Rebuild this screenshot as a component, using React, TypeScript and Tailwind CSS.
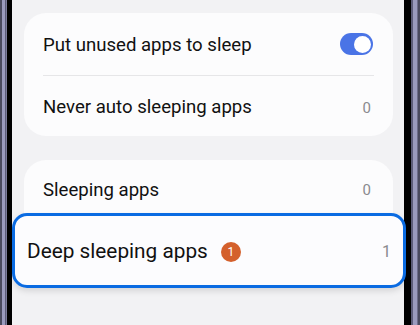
import React from "react";

export default function App() {
  return (
    <div
      className="flex w-[420px] h-[325px] overflow-hidden bg-[#f2f2f4]"
      style={{ fontFamily: "Roboto, 'Noto Sans', sans-serif" }}
    >
      {/* left bezel */}
      <div className="flex h-full shrink-0">
        <div className="w-[2px] bg-[#4a4a5e]" />
        <div className="w-[3px] bg-[#9a9abd]" />
        <div className="w-[1px] bg-[#5c5c78]" />
        <div className="w-[1px] bg-[#7c7c9c]" />
        <div className="w-[5px] bg-black" />
      </div>

      {/* screen */}
      <div className="relative flex-1 flex flex-col pt-[13px] pl-3 pr-[11px] bg-[#f2f2f4]">
        {/* card 1 */}
        <div className="shrink-0 rounded-[22px] bg-[#fcfcfd] px-[19px]">
          <div className="flex items-center justify-between h-[62px]">
            <span className="text-[18.6px] text-[#111] pt-[4px]">Put unused apps to sleep</span>
            <div className="relative w-[33px] h-[22px] rounded-full bg-[#4a74e6] mr-[1px]">
              <div className="absolute right-[2px] top-[2.5px] w-[17px] h-[17px] rounded-full bg-white" />
            </div>
          </div>
          <div className="h-px bg-[#e6e6e8]" />
          <div className="flex items-center justify-between h-[60px] pt-[4px]">
            <span className="text-[18.6px] text-[#111]">Never auto sleeping apps</span>
            <span className="text-[15px] text-[#8a8a8e] mr-[3px]">0</span>
          </div>
        </div>

        {/* card 2 */}
        <div className="shrink-0 mt-[24px] rounded-t-[22px] bg-[#fcfcfd] flex flex-col">
          <div className="shrink-0 flex items-center justify-between h-[56px] px-[19px] pt-[5px]">
            <span className="text-[18.6px] text-[#111]">Sleeping apps</span>
            <span className="text-[15px] text-[#8a8a8e] mr-[3px]">0</span>
          </div>
          <div className="shrink-0 relative z-10 -ml-3 -mr-[13px] mt-[-3px] h-[75px] rounded-[15px] border-[3.5px] border-[#0a6be2] bg-[#fcfcfe] shadow-[0_3px_6px_rgba(0,0,0,0.12)] flex items-center justify-between pl-[12px] pr-[12px] pt-[2px]">
            <div className="flex items-center">
              <span className="text-[20.8px] text-[#111]">Deep sleeping apps</span>
              <span className="ml-[13px] w-[20px] h-[20px] rounded-full bg-[#d4602c] text-white text-[12px] flex items-center justify-center">
                1
              </span>
            </div>
            <span className="text-[16px] text-[#8a8a8e]">1</span>
          </div>
        </div>
      </div>

      {/* right bezel */}
      <div className="flex h-full shrink-0">
        <div className="w-[7px] bg-black" />
        <div className="w-[2px] bg-[#5c5c78]" />
        <div className="w-[4px] bg-[#9a9abd]" />
        <div className="w-[1px] bg-[#6c6c8a]" />
        <div className="w-[2px] bg-[#4a4a5e]" />
      </div>
    </div>
  );
}
